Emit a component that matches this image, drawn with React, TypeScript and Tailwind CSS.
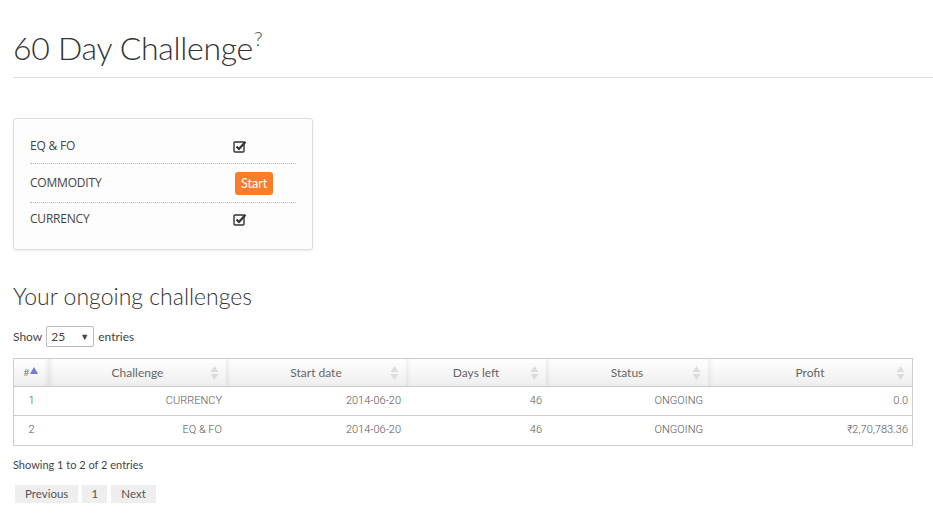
import { FC } from "react";

const SortIcon: FC<{ active?: boolean }> = ({ active }) =>
  active ? (
    <svg width="10" height="10" viewBox="0 0 10 10" className="inline-block">
      <polygon points="5,1 9,8 1,8" fill="#7b74d6" />
    </svg>
  ) : (
    <svg width="9" height="16" viewBox="0 0 9 16">
      <polygon points="4.5,1 8.5,7 0.5,7" fill="#dcdcdc" />
      <polygon points="0.5,9 8.5,9 4.5,15" fill="#dcdcdc" />
    </svg>
  );

const CheckBox: FC = () => (
  <svg width="14" height="13" viewBox="0 0 14 13">
    <rect x="1" y="2" width="10" height="10" rx="1" fill="none" stroke="#333" strokeWidth="1.4" />
    <path d="M3.5 6.5 L6 9 L12.5 1.8" fill="none" stroke="#333" strokeWidth="2.2" />
  </svg>
);

const challenges = [
  { label: "EQ & FO", done: true },
  { label: "COMMODITY", done: false },
  { label: "CURRENCY", done: true },
];

const rows = [
  { id: 1, name: "CURRENCY", start: "2014-06-20", days: 46, status: "ONGOING", profit: "0.0" },
  { id: 2, name: "EQ & FO", start: "2014-06-20", days: 46, status: "ONGOING", profit: "₹2,70,783.36" },
];

const columns = [
  { title: "Challenge", w: "w-[177px]" },
  { title: "Start date", w: "w-[180px]" },
  { title: "Days left", w: "w-[140px]" },
  { title: "Status", w: "w-[162px]" },
  { title: "Profit", w: "flex-1" },
];

export default function App() {
  return (
    <div className="w-[933px] h-[532px] bg-white overflow-hidden font-['Lato',sans-serif] text-[#333]">
      {/* Page header */}
      <div className="pl-[13px] pt-[28px]">
        <h1 className="h-[40px] text-[32px] leading-[40px] font-light text-[#333] tracking-[-0.3px]">
          60 Day Challenge
          <span className="text-[20px] leading-[0] font-light text-[#444] ml-[1px] relative -top-[14px]">?</span>
        </h1>
        <div className="mt-[9px] h-px bg-[#ddd]" />
      </div>

      {/* Challenge card */}
      <div className="ml-[13px] mt-[40px] w-[300px] h-[132px] border border-[#ddd] rounded-[3px] bg-[#fdfdfd] shadow-[0_1px_2px_rgba(0,0,0,0.08)] px-[16px] pt-[10px]">
        {challenges.map((c, i) => (
          <div
            key={c.label}
            className={`flex items-center ${i < 2 ? "border-b border-dotted border-[#bbb]" : ""} ${
              i === 0 ? "h-[35px]" : i === 1 ? "h-[39px]" : "h-[32px]"
            }`}
          >
            <span className="w-[203px] text-[12px] text-[#444] font-['Open_Sans',sans-serif] tracking-[-0.2px]">
              {c.label}
            </span>
            {c.done ? (
              <CheckBox />
            ) : (
              <button className="bg-[#f97d2b] text-white text-[12.5px] rounded-[3px] px-[6px] h-[23px] leading-[23px] ml-[2px]">
                Start
              </button>
            )}
          </div>
        ))}
      </div>

      {/* Ongoing challenges */}
      <div className="px-[13px] mt-[32px]">
        <h2 className="text-[23px] leading-[28px] font-light text-[#333]">Your ongoing challenges</h2>

        <div className="mt-[16px] flex items-center gap-[4px] text-[12px] text-[#444]">
          <span>Show</span>
          <div className="w-[48px] h-[21px] border border-[#bbb] rounded-[2px] flex items-center justify-between px-[4px] text-[12px]">
            <span>25</span>
            <span className="text-[9px]">▼</span>
          </div>
          <span>entries</span>
        </div>

        {/* Table */}
        <div className="mt-[11px] w-[900px] border border-[#ccc]">
          <div className="flex h-[28px] border-b border-[#ccc] text-[12px] text-[#666]">
            <div className="w-[35px] flex items-center justify-center bg-gradient-to-b from-white to-[#eee] shadow-[inset_-4px_0_6px_-4px_rgba(0,0,0,0.12)]">
              <span className="text-[10px] text-[#888]">#</span>
              <span className="-mt-[4px]">
                <SortIcon active />
              </span>
            </div>
            {columns.map((col) => (
              <div
                key={col.title}
                className={`${col.w} relative flex items-center justify-center bg-gradient-to-b from-white to-[#eee] shadow-[inset_4px_0_6px_-4px_rgba(0,0,0,0.12)]`}
              >
                <span>{col.title}</span>
                <span className="absolute right-[7px] top-[6px]">
                  <SortIcon />
                </span>
              </div>
            ))}
          </div>
          {rows.map((r, i) => (
            <div
              key={r.id}
              className={`flex h-[29px] items-center text-[11px] text-[#555] font-['Roboto',sans-serif] font-light ${
                i === 0 ? "border-b border-[#ccc]" : ""
              }`}
            >
              <div className="w-[35px] text-center">{r.id}</div>
              <div className="w-[177px] text-right pr-[4px]">{r.name}</div>
              <div className="w-[180px] text-right pr-[5px]">{r.start}</div>
              <div className="w-[140px] text-right pr-[4px]">{r.days}</div>
              <div className="w-[162px] text-right pr-[5px]">{r.status}</div>
              <div className="flex-1 text-right pr-[4px]">{r.profit}</div>
            </div>
          ))}
        </div>

        <div className="mt-[11px] text-[11px] text-[#444]">Showing 1 to 2 of 2 entries</div>

        <div className="mt-[11px] ml-[2px] flex gap-[4px] text-[11.5px] text-[#555]">
          <span className="bg-[#eee] h-[18px] leading-[18px] px-[10px]">Previous</span>
          <span className="bg-[#eee] h-[18px] leading-[18px] w-[25px] text-center">1</span>
          <span className="bg-[#eee] h-[18px] leading-[18px] px-[10px]">Next</span>
        </div>
      </div>
    </div>
  );
}
